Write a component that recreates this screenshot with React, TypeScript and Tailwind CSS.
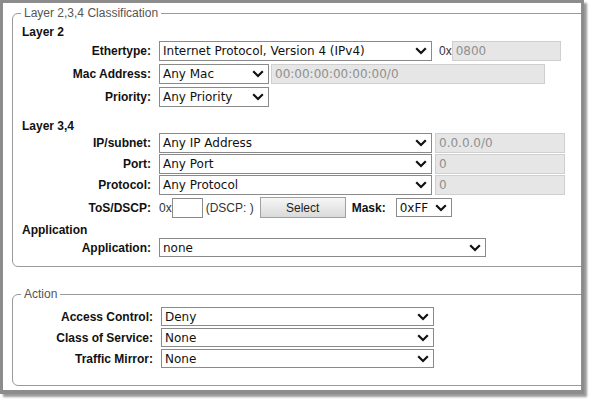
const Chevron = () => (
    <svg width="12" height="8" viewBox="0 0 12 8" className="shrink-0">
        <polyline points="1.2,1.2 6,6 10.8,1.2" fill="none" stroke="#111" strokeWidth="2.2" />
    </svg>
);

function Select({ value, w, h = "h-[20px]" }: { value: string; w: string; h?: string }) {
    return (
        <div className={`${w} ${h} flex items-center justify-between border border-[#8a8a8a] bg-white pl-[3px] pr-[4px] shrink-0`}>
            <span className="font-['DejaVu_Sans',sans-serif] text-[12px] text-[#111] leading-none">{value}</span>
            <Chevron />
        </div>
    );
}

function Disabled({ value, w, h = "h-[20px]" }: { value: string; w: string; h?: string }) {
    return (
        <div className={`${w} ${h} flex items-center border border-[#cfcfcf] bg-[#e6e6e6] pl-[3px] shrink-0`}>
            <span className="font-['DejaVu_Sans',sans-serif] text-[12px] text-[#8f8f8f] leading-none">{value}</span>
        </div>
    );
}

function Row({ label, children, className = "", labelW = "w-[129px]", gap = "ml-[8px]" }: { label: string; children: React.ReactNode; className?: string; labelW?: string; gap?: string }) {
    return (
        <div className={`flex items-center ${className}`}>
            <div className={`${labelW} text-right font-bold text-[12px] text-[#111] shrink-0`}>{label}</div>
            <div className={`flex items-center ${gap}`}>{children}</div>
        </div>
    );
}

function Legend({ text }: { text: string }) {
    return (
        <div className="absolute -top-[8px] left-[8px] bg-white px-[3px] text-[12px] leading-[14px] text-[#555]">
            {text}
        </div>
    );
}

export default function App() {
    return (
        <div className="w-[589px] h-[399px] bg-white font-['Liberation_Sans',Arial,sans-serif]">
            <div className="w-[584px] h-[394px] border-l-[3px] border-t-[3px] border-r-[3px] border-b-[4px] border-[#8c8c8c] shadow-[3px_3px_2px_rgba(0,0,0,0.4)] overflow-hidden">
                <div className="relative mt-[10px] ml-[9px] w-[600px] h-[254px] border border-[#9a9a9a] rounded-[6px] pl-[9px] pt-[11px]">
                    <Legend text="Layer 2,3,4 Classification" />
                    <div className="h-[14px] leading-[14px] font-bold text-[12px] text-[#111]">Layer 2</div>
                    <Row label="Ethertype:" className="mt-[2px]">
                        <Select value="Internet Protocol, Version 4 (IPv4)" w="w-[273px]" />
                        <span className="ml-[7px] text-[12px] text-[#333]">0x</span>
                        <Disabled value="0800" w="w-[109px]" />
                    </Row>
                    <Row label="Mac Address:" className="mt-[3px]">
                        <Select value="Any Mac" w="w-[110px]" />
                        <div className="ml-[2px]"><Disabled value="00:00:00:00:00:00/0" w="w-[274px]" /></div>
                    </Row>
                    <Row label="Priority:" className="mt-[3px]">
                        <Select value="Any Priority" w="w-[110px]" />
                    </Row>
                    <div className="mt-[12px] h-[14px] leading-[14px] font-bold text-[12px] text-[#111]">Layer 3,4</div>
                    <Row label="IP/subnet:" className="mt-[0px]">
                        <Select value="Any IP Address" w="w-[273px]" />
                        <div className="ml-[3px]"><Disabled value="0.0.0.0/0" w="w-[130px]" /></div>
                    </Row>
                    <Row label="Port:" className="mt-[1px]">
                        <Select value="Any Port" w="w-[273px]" />
                        <div className="ml-[3px]"><Disabled value="0" w="w-[130px]" /></div>
                    </Row>
                    <Row label="Protocol:" className="mt-[1px]">
                        <Select value="Any Protocol" w="w-[273px]" />
                        <div className="ml-[3px]"><Disabled value="0" w="w-[130px]" /></div>
                    </Row>
                    <Row label="ToS/DSCP:" className="mt-[2px]">
                        <span className="text-[12px] text-[#333]">0x</span>
                        <div className="w-[31px] h-[20px] border border-[#8a8a8a] bg-white" />
                        <span className="ml-[3px] text-[12px] text-[#333]">(DSCP: )</span>
                        <button className="ml-[6px] w-[86px] h-[21px] border border-[#a0a0a0] bg-gradient-to-b from-[#f6f6f6] to-[#dadada] text-[12px] text-[#222]">Select</button>
                        <span className="ml-[6px] font-bold text-[12px] text-[#111]">Mask:</span>
                        <div className="ml-[10px]"><Select value="0xFF" w="w-[56px]" h="h-[19px]" /></div>
                    </Row>
                    <div className="mt-[5px] h-[14px] leading-[14px] font-bold text-[12px] text-[#111]">Application</div>
                    <Row label="Application:" className="mt-[1px]">
                        <Select value="none" w="w-[327px]" h="h-[19px]" />
                    </Row>
                </div>
                <div className="relative mt-[27px] ml-[9px] w-[600px] h-[92px] border border-[#9a9a9a] rounded-[6px] pl-[9px] pt-[12px]">
                    <Legend text="Action" />
                    <Row label="Access Control:" labelW="w-[131px]" gap="ml-[8px]">
                        <Select value="Deny" w="w-[273px]" h="h-[19px]" />
                    </Row>
                    <Row label="Class of Service:" labelW="w-[131px]" gap="ml-[8px]" className="mt-[2px]">
                        <Select value="None" w="w-[273px]" h="h-[19px]" />
                    </Row>
                    <Row label="Traffic Mirror:" labelW="w-[131px]" gap="ml-[8px]" className="mt-[2px]">
                        <Select value="None" w="w-[273px]" h="h-[19px]" />
                    </Row>
                </div>
            </div>
        </div>
    );
}
